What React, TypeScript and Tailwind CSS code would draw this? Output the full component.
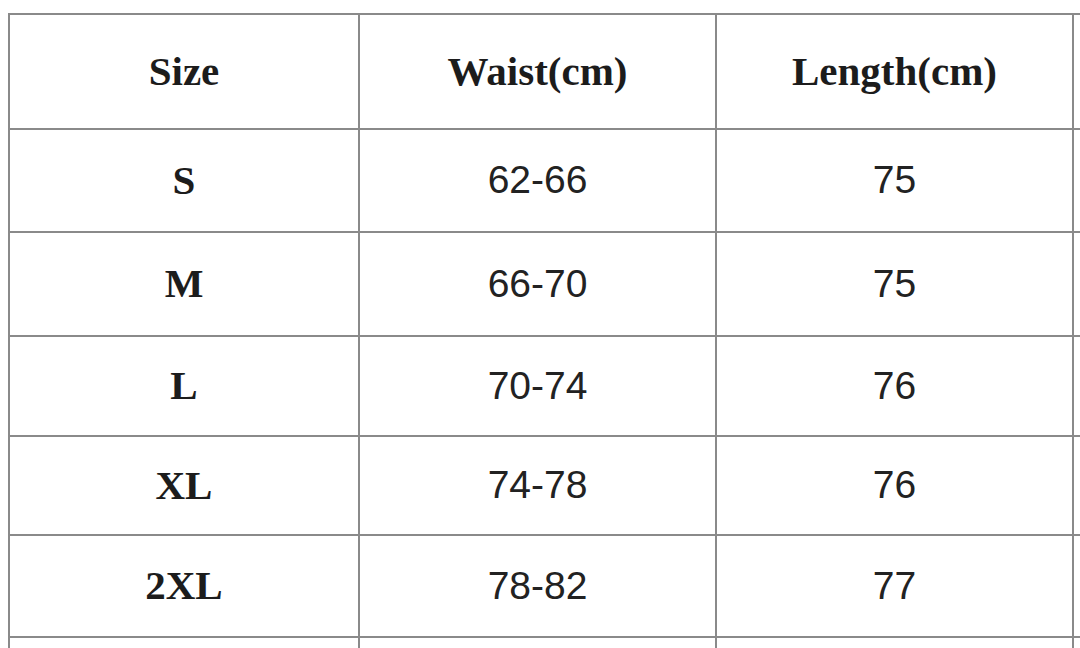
const rows = [
  { size: "S", waist: "62-66", length: "75" },
  { size: "M", waist: "66-70", length: "75" },
  { size: "L", waist: "70-74", length: "76" },
  { size: "XL", waist: "74-78", length: "76" },
  { size: "2XL", waist: "78-82", length: "77" },
];

const serif = "font-['Liberation_Serif',serif] font-bold text-[41px] text-[#1c1c1c]";
const sans = "font-['Liberation_Sans',Arial,sans-serif] text-[39px] text-[#222]";

export default function App() {
  return (
    <div className="w-[1080px] h-[648px] overflow-hidden bg-white pl-[8px] pt-[13px]">
      <div className="grid w-max grid-cols-[348px_355px_355px_200px] grid-rows-[113px_101px_102px_98px_97px_100px_60px] gap-[2px] border-2 border-[#8a8a8a] bg-[#8a8a8a]">
        <div className={`flex items-center justify-center bg-white ${serif}`}>Size</div>
        <div className={`flex items-center justify-center bg-white ${serif}`}>Waist(cm)</div>
        <div className={`flex items-center justify-center bg-white ${serif}`}>Length(cm)</div>
        <div className="bg-white" />
        {rows.map((r) => (
          <div key={r.size} className="contents">
            <div className={`flex items-center justify-center bg-white ${serif}`}>{r.size}</div>
            <div className={`flex items-center justify-center bg-white ${sans}`}>{r.waist}</div>
            <div className={`flex items-center justify-center bg-white ${sans}`}>{r.length}</div>
            <div className="bg-white" />
          </div>
        ))}
        <div className="bg-white" />
        <div className="bg-white" />
        <div className="bg-white" />
        <div className="bg-white" />
      </div>
    </div>
  );
}
